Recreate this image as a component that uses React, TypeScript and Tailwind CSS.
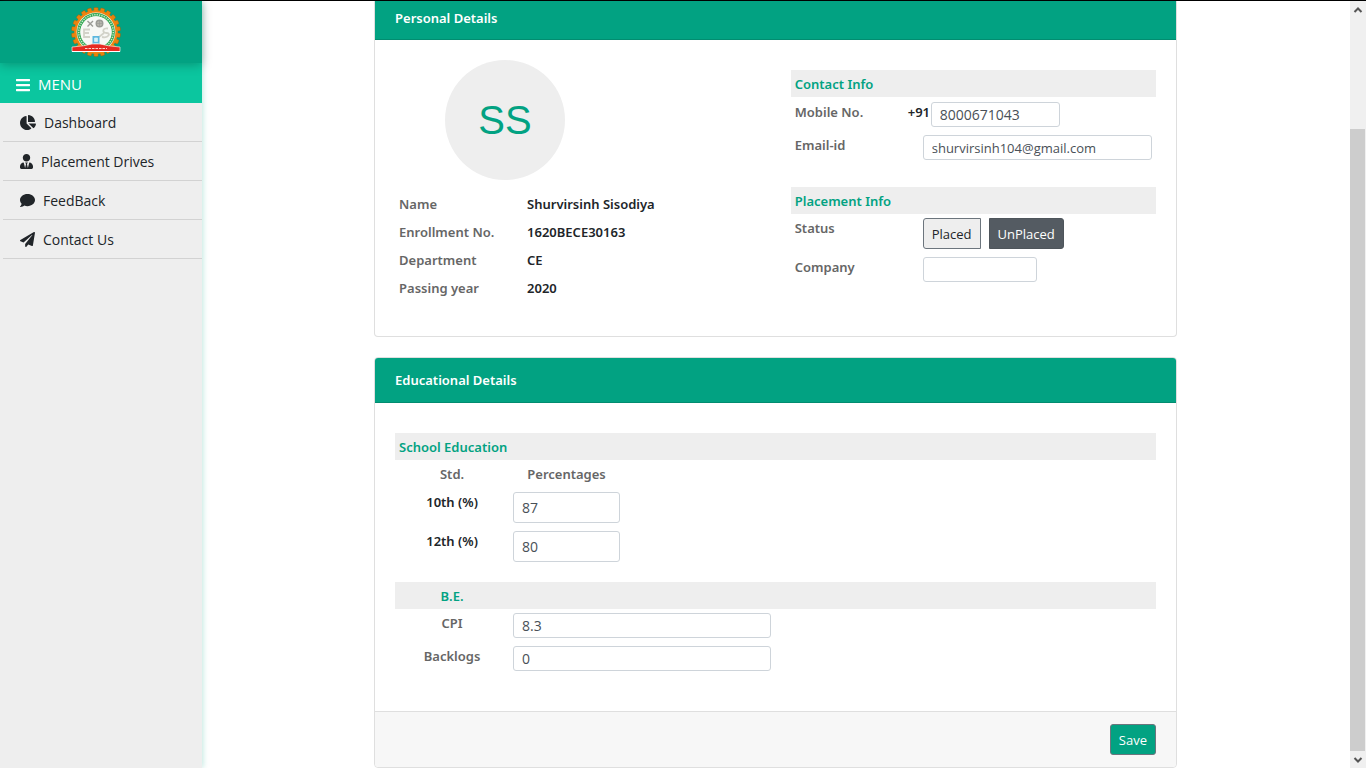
import type { ReactNode } from "react";
import { FaBars, FaChartPie, FaUserTie, FaComment, FaPaperPlane } from "react-icons/fa";

const field =
  "block rounded-[3px] border border-[#ced4da] bg-white px-2 font-['Open_Sans',sans-serif] font-normal text-[#495057] outline-none";

const menu = [
  { label: "Dashboard", icon: FaChartPie, width: "w-4" },
  { label: "Placement Drives", icon: FaUserTie, width: "w-[13px]" },
  { label: "FeedBack", icon: FaComment, width: "w-[15px]" },
  { label: "Contact Us", icon: FaPaperPlane, width: "w-[15px]" },
];

const details = [
  ["Name", "Shurvirsinh Sisodiya"],
  ["Enrollment No.", "1620BECE30163"],
  ["Department", "CE"],
  ["Passing year", "2020"],
];

function Logo() {
  const teeth = Array.from({ length: 22 }, (_, i) => (i * 360) / 22);
  return (
    <svg viewBox="0 0 50 50" className="size-[50px]" role="img" aria-label="Institute logo">
      <g fill="#e9820c" stroke="#75651f" strokeWidth=".4">
        {teeth.map((a) => (
          <rect key={a} x="22.8" y="0.4" width="4.4" height="6" rx="1" transform={`rotate(${a} 25 25)`} />
        ))}
      </g>
      <circle cx="25" cy="25" r="21.8" fill="#ef8410" />
      <circle cx="25" cy="25" r="19.4" fill="#fff" />
      <circle cx="25" cy="25" r="17.3" fill="none" stroke="#36a956" strokeWidth="3.2" />
      <circle cx="25" cy="25" r="17.3" fill="none" stroke="#cde9d1" strokeWidth="1.4" strokeDasharray="1.3 1.1" />
      <circle cx="25" cy="25" r="15.4" fill="#f7f8f5" />
      <g stroke="#9a9b96" strokeWidth="1.4" fill="none">
        <path d="M16.500 14l5.500 5.500M22 14l-5.500 5.500" />
        <circle cx="28.500" cy="16.500" r="3.300" fill="#b5b5ad" />
        <path d="M28.500 13.500v6M25.500 16.500h6" strokeWidth=".7" />
      </g>
      <g stroke="#d2d2c9" strokeWidth="1.8" fill="none">
        <path d="M19 22.500h-6v7.500h6M13 26h5M37 21.500c-6-1-6 4.500-1.500 4.500s2.500 5.500-4.500 4M28 30l5-4" />
      </g>
      <path d="M21.500 29h7v10h-7z" fill="#5cb7de" />
      <path d="M23.500 31h3v3.500h-3zM22.500 36.500h5" fill="#d7f1fa" stroke="#d7f1fa" strokeWidth=".7" />
      <path d="M1 40q13-1 20-3h8q7 2 20 3v4.500H1z" fill="#e62a22" stroke="#f7e7dc" strokeWidth=".7" />
      <path d="M1 44.500h48" stroke="#fff" strokeWidth="1" />
      <path d="M14 41.500h22" stroke="#fbd5ca" strokeWidth="1.1" strokeDasharray="2.500 1" />
    </svg>
  );
}

function Sidebar() {
  return (
    <aside className="w-[202px] shrink-0 bg-[#eee] font-normal shadow-[1px_0_6px_rgba(2,162,130,0.25)]">
      <div className="relative flex h-[62px] items-center justify-center bg-[#02a282] pr-[10px] shadow-[0_2px_10px_rgba(0,0,0,0.25)]">
        <Logo />
      </div>
      <button
        type="button"
        className="flex h-10 w-full items-center gap-2 bg-[#0bc69f] px-4 pt-[3px] font-['Open_Sans',sans-serif] text-[15px] text-white"
      >
        <FaBars className="h-4 w-[14px]" />
        MENU
      </button>
      <nav className="pl-[3px]">
        {menu.map(({ label, icon: Icon, width }) => (
          <a
            key={label}
            href="#"
            className="flex h-[39px] items-center gap-2 border-b border-[#d2d2d2] pl-[17px] font-['Open_Sans',sans-serif] text-[14px] text-[#212529]"
          >
            <Icon className={`h-[15px] ${width}`} />
            {label}
          </a>
        ))}
      </nav>
    </aside>
  );
}

function Band({ children, centered = false }: { children: ReactNode; centered?: boolean }) {
  return (
    <h3 className="bg-[#eee] px-1 pt-[5px] pb-[3px] leading-[19px] text-[#02a282]">
      {centered ? <span className="block w-[106px] text-center">{children}</span> : children}
    </h3>
  );
}

function Row({ label, id, children }: { label: string; id?: string; children: ReactNode }) {
  return (
    <div className="flex items-start p-1">
      <label htmlFor={id} className="w-32 shrink-0 leading-5 text-[#666]">
        {label}
      </label>
      {children}
    </div>
  );
}

function ScrollRail() {
  return (
    <div aria-hidden="true" className="flex w-4 shrink-0 flex-col bg-[#f0f0f0]">
      <svg viewBox="0 0 16 17" className="h-[17px] w-4">
        <path d="M4.500 11L8 7.500l3.500 3.500" fill="none" stroke="#555" strokeWidth="2" />
      </svg>
      <div className="h-[111px]" />
      <div className="mr-px flex-1 bg-[#cdcdcd]" />
      <svg viewBox="0 0 16 17" className="h-[17px] w-4">
        <path d="M4.500 7L8 10.500 11.500 7" fill="none" stroke="#555" strokeWidth="2" />
      </svg>
    </div>
  );
}

export default function App() {
  return (
    <div className="flex min-h-screen border-t border-black bg-white font-['Noto_Sans',sans-serif] text-[13px] font-semibold text-[#212529]">
      <Sidebar />
      <main className="min-w-0 flex-1 pr-px">
        <form className="mx-auto w-[70%] max-w-[803px]" onSubmit={(e) => e.preventDefault()}>
          <section className="rounded-b border border-t-0 border-[#dfdfdf]">
            <h2 className="border-b border-[#028c70] bg-[#02a282] px-5 pt-[7px] pb-[11px] leading-5 text-white">
              Personal Details
            </h2>
            <div className="flex justify-between px-5 pt-5 pb-[34px]">
              <div>
                <div className="ml-[50px] flex size-[120px] items-center justify-center rounded-full bg-[#eee] font-['Liberation_Sans',sans-serif] text-[40px] font-normal text-[#02a282]">
                  SS
                </div>
                <dl className="mt-[10px]">
                  {details.map(([term, value]) => (
                    <div key={term} className="flex p-1 leading-5">
                      <dt className="w-32 text-[#666]">{term}</dt>
                      <dd>{value}</dd>
                    </div>
                  ))}
                </dl>
              </div>
              <div className="w-[48%] pt-[10px]">
                <Band>Contact Info</Band>
                <div className="flex items-start p-1 pt-[5px]">
                  <label htmlFor="mobile" className="w-[113px] shrink-0 leading-5 text-[#666]">
                    Mobile No.
                  </label>
                  <span className="w-[23px] shrink-0 whitespace-nowrap leading-5">+91</span>
                  <input id="mobile" type="tel" defaultValue="8000671043" className={`${field} h-[25px] w-[129px] text-sm`} />
                </div>
                <Row label="Email-id" id="email">
                  <input id="email" type="email" defaultValue="shurvirsinh104@gmail.com" className={`${field} h-[25px] min-w-0 flex-1 text-[13px]`} />
                </Row>
                <div className="h-[23px]" />
                <Band>Placement Info</Band>
                <Row label="Status">
                  <div className="flex gap-2 font-['Open_Sans',sans-serif] text-[13px] font-normal">
                    <button type="button" className="h-[31px] rounded-l-[3px] border border-[#6c757d] bg-[#eee] px-2 pt-0.5">
                      Placed
                    </button>
                    <button type="button" className="h-[31px] rounded-r-[3px] border border-[#4e555b] bg-[#545b62] px-2 pt-0.5 text-white">
                      UnPlaced
                    </button>
                  </div>
                </Row>
                <Row label="Company" id="company">
                  <input id="company" type="text" className={`${field} h-[25px] w-[114px] text-sm`} />
                </Row>
              </div>
            </div>
          </section>

          <section className="mt-5 rounded border border-[#dfdfdf]">
            <h2 className="rounded-t-[3px] border-b border-[#028c70] bg-[#02a282] px-5 py-3 leading-5 text-white">
              Educational Details
            </h2>
            <div className="px-5 pt-[30px] pb-9">
              <Band>School Education</Band>
              <table>
                <thead>
                  <tr className="text-[#666]">
                    <th className="w-[114px] p-1 text-center leading-5 font-semibold">Std.</th>
                    <th className="p-1 text-center leading-5 font-semibold">Percentages</th>
                  </tr>
                </thead>
                <tbody>
                  {[
                    ["10th", "87"],
                    ["12th", "80"],
                  ].map(([std, value]) => (
                    <tr key={std} className="align-top">
                      <th className="p-1 text-center leading-5 font-semibold">
                        <label htmlFor={`std-${std}`}>{std} (%)</label>
                      </th>
                      <td className="p-1">
                        <input id={`std-${std}`} defaultValue={value} className={`${field} h-[31px] w-[107px] text-sm`} />
                      </td>
                    </tr>
                  ))}
                </tbody>
              </table>
              <div className="h-4" />
              <Band centered>B.E.</Band>
              {[
                ["CPI", "8.3"],
                ["Backlogs", "0"],
              ].map(([name, value]) => (
                <div key={name} className="flex items-start gap-2 p-1">
                  <label htmlFor={name} className="w-[106px] text-center leading-5 text-[#666]">
                    {name}
                  </label>
                  <input id={name} defaultValue={value} className={`${field} h-[25px] w-[258px] text-sm`} />
                </div>
              ))}
            </div>
            <div className="flex justify-end rounded-b border-t border-[#dfdfdf] bg-[#f7f7f7] px-5 py-3">
              <button
                type="submit"
                className="h-[31px] rounded-[3px] border border-[#6c757d] bg-[#02a282] px-2 pt-0.5 font-['Open_Sans',sans-serif] text-[13px] font-normal text-white"
              >
                Save
              </button>
            </div>
          </section>
        </form>
      </main>
      <ScrollRail />
    </div>
  );
}
